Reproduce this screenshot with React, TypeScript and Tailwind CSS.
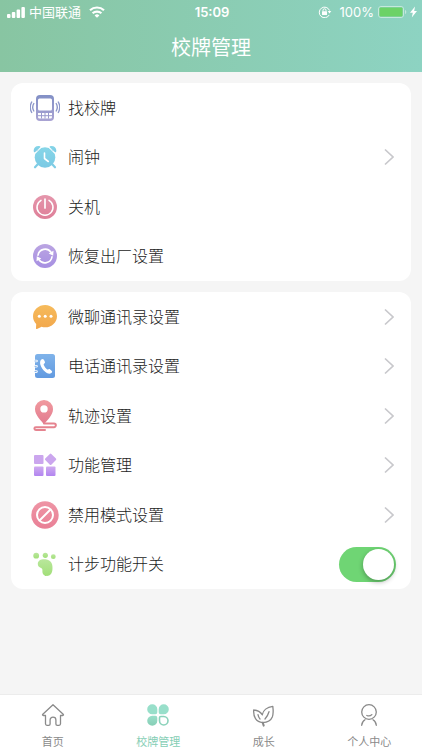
import { useState, type ReactNode } from "react";

function Svg({ size, children, box = 24 }: { size: string; children: ReactNode; box?: number }) {
  return (
    <svg viewBox={`0 0 ${box} ${box}`} className={`${size} shrink-0`} fill="none" aria-hidden="true">
      {children}
    </svg>
  );
}

function Gradient({ id, from, to }: { id: string; from: string; to: string }) {
  return (
    <defs>
      <linearGradient id={id} x1="0" y1="0" x2="0" y2="1">
        <stop offset="0" stopColor={from} />
        <stop offset="1" stopColor={to} />
      </linearGradient>
    </defs>
  );
}

const BadgeIcon = (
  <Svg size="size-[30px]" box={30}>
    <Gradient id="badge" from="#8290c6" to="#a9a3d3" />
    <rect x="6" y="2" width="18" height="26" rx="4" fill="url(#badge)" />
    <rect x="8" y="5.5" width="14" height="12" rx="1.5" fill="#fff" />
    <path d="M8 20h14v4a1.500 1.500 0 0 1-1.500 1.500h-11A1.500 1.500 0 0 1 8 24z" fill="#fff" />
    <path d="M8 22.700h14M11.500 20v5.500M15 20v5.500M18.500 20v5.500" stroke="#9a9acd" strokeWidth="1" />
    <path
      d="M3.800 10.500c-1.200 2-1.200 5.500 0 7.500M1.700 9c-1.700 3-1.700 7.500 0 10.500M26.200 10.500c1.200 2 1.200 5.500 0 7.500M28.300 9c1.700 3 1.700 7.500 0 10.500"
      stroke="#8d97ca"
      strokeWidth="1.400"
      strokeLinecap="round"
    />
  </Svg>
);

const AlarmIcon = (
  <Svg size="size-6">
    <Gradient id="alarm" from="#86d6e8" to="#7bc9e4" />
    <g fill="url(#alarm)">
      <circle cx="12" cy="12.500" r="10.300" />
      <path d="M.900 6.800C-.2 3.500 3 .2 6.900 1.300c.6.200.7.700.2 1.100L2.200 7.100c-.5.400-1.100.3-1.300-.3zM23.100 6.800C24.200 3.500 21 .2 17.100 1.300c-.6.200-.7.700-.2 1.100l4.900 4.700c.5.400 1.100.3 1.300-.3z" />
    </g>
    <path d="M4.500 19.500 2 22.300M19.500 19.500 22 22.300" stroke="#80cde5" strokeWidth="2.200" strokeLinecap="round" />
    <path d="M11.500 8v5.500l3.800 3" stroke="#fff" strokeWidth="1.600" strokeLinecap="round" strokeLinejoin="round" />
    <path d="M2.200 8.500 7.800 2.900M21.800 8.500 16.200 2.900" stroke="#fff" strokeWidth=".8" />
  </Svg>
);

const PowerIcon = (
  <Svg size="size-6">
    <Gradient id="power" from="#e596ac" to="#de7f98" />
    <circle cx="12" cy="12" r="12" fill="url(#power)" />
    <path d="M8 5.300a8 8 0 1 0 8 0" stroke="#fff" strokeWidth="1.500" strokeLinecap="round" />
    <path d="M12 4v9" stroke="#fff" strokeWidth="1.700" strokeLinecap="round" />
  </Svg>
);

const ResetIcon = (
  <Svg size="size-6">
    <Gradient id="reset" from="#bba5e2" to="#a68fe2" />
    <circle cx="12" cy="12" r="12" fill="url(#reset)" />
    <path d="M5 11.200A7.200 7.200 0 0 1 18 8.300M19 12.800A7.200 7.200 0 0 1 6 15.700" stroke="#fff" strokeWidth="1.600" strokeLinecap="round" />
    <path d="m20.500 6.700-.3 5-4.500-2.200zM3.500 17.300l.3-5 4.500 2.200z" fill="#fff" />
  </Svg>
);

const ChatIcon = (
  <Svg size="size-6">
    <Gradient id="chat" from="#f6bb5c" to="#f2a74b" />
    <path d="M12.200 0C5.500 0 0 4.900 0 11.200c0 3.500 1.500 6 3.200 7.800L3 23.300c0 .7.500.9 1 .6l4.600-2.200c1.100.4 2.300.6 3.600.6C18.800 22.300 24 17.400 24 11.200S18.800 0 12.200 0z" fill="url(#chat)" />
    <circle cx="6.300" cy="11.200" r="1.500" fill="#fff" />
    <circle cx="12.200" cy="11.200" r="1.500" fill="#fff" />
    <circle cx="18" cy="11.200" r="1.500" fill="#fff" />
  </Svg>
);

const ContactsIcon = (
  <Svg size="size-6">
    <Gradient id="contacts" from="#7fb3ea" to="#629ae0" />
    <rect x="2" y="0" width="20" height="24" rx="2.500" fill="url(#contacts)" />
    <path d="M1.500 7h2M1.500 12.300h2M1.500 17.600h2" stroke="#fff" strokeWidth="2.600" strokeLinecap="round" />
    <path d="M2 7h1.300M2 12.300h1.300M2 17.600h1.300" stroke="#78ace8" strokeWidth="1" strokeLinecap="round" />
    <path d="M8.300 5.500c1.100-1 2.100-.7 2.700.4l.9 1.900c.3.800 0 1.400-.8 1.900-.5.400-.5.800-.2 1.500.7 1.700 1.700 3 3 4.100.5.400.9.400 1.400.1.700-.5 1.300-.5 1.900 0l1.400 1.300c.8.800.7 1.700-.3 2.400-1.600 1.100-3.800.7-5.800-1-2.500-2.100-4.300-4.700-5.100-7.400-.6-2.200-.4-4 .9-5.200z" fill="#fff" />
  </Svg>
);

const PinIcon = (
  <svg viewBox="0 0 24 32" className="h-8 w-6 shrink-0" fill="none" aria-hidden="true">
    <Gradient id="pin" from="#f19a9f" to="#e27b8f" />
    <path fillRule="evenodd" d="M11 0a9 9 0 0 0-9 9.200C2 15 8.200 20.500 10 23.200c.6.900 1.400.9 2 0C13.800 20.500 20 15 20 9.200A9 9 0 0 0 11 0zm0 5.200a3.700 3.700 0 1 1 0 7.400 3.700 3.700 0 0 1 0-7.400z" fill="url(#pin)" />
    <path d="M11 23.500h10a1.800 1.800 0 0 1 0 3.700H2.800a1.300 1.300 0 0 0 0 2.800H12" stroke="#e5838f" strokeWidth="2" strokeLinecap="round" />
  </svg>
);

const ModulesIcon = (
  <Svg size="size-6">
    <Gradient id="modules" from="#cfabef" to="#b285f0" />
    <rect x="1" y="2" width="9.500" height="9" rx="1" fill="#cba6ee" />
    <rect x="1" y="13.500" width="9.500" height="9.500" rx="1" fill="url(#modules)" />
    <rect x="13" y="13.500" width="9.500" height="9.500" rx="1" fill="url(#modules)" />
    <rect x="13.300" y="2" width="8.600" height="8.600" rx="1" transform="rotate(45 17.600 6.300)" fill="#cba6ee" />
  </Svg>
);

const ForbidIcon = (
  <Svg size="size-7" box={28}>
    <Gradient id="forbid" from="#ee95a5" to="#e98096" />
    <circle cx="14" cy="14" r="13.700" fill="url(#forbid)" />
    <circle cx="14" cy="14" r="8" stroke="#fff" strokeWidth="2" />
    <path d="m8.500 19.500 11-11" stroke="#fff" strokeWidth="2" />
  </Svg>
);

const FootIcon = (
  <Svg size="size-6">
    <Gradient id="foot" from="#b9e79c" to="#a2df79" />
    <g fill="url(#foot)">
      <path d="M12.500 7.300c-4-.5-7.500 1-7.700 4.200-.2 2.700 1.400 3.700 3.200 4.500 1.500.7 1.500 1.700 1.400 3.300-.1 2.900 1.900 4.700 4.600 4.700 3.200 0 4.900-2.200 5.400-5.900.7-5.700-1-10.200-6.900-10.800z" />
      <circle cx="3.200" cy="3.700" r="2.900" />
      <circle cx="12.300" cy="3.300" r="2.600" />
      <circle cx="20.300" cy="4.700" r="2.400" />
    </g>
  </Svg>
);

type Item = { label: string; icon: ReactNode; chevron?: boolean };

const deviceItems: Item[] = [
  { label: "找校牌", icon: BadgeIcon },
  { label: "闹钟", icon: AlarmIcon, chevron: true },
  { label: "关机", icon: PowerIcon },
  { label: "恢复出厂设置", icon: ResetIcon },
];

const settingItems: Item[] = [
  { label: "微聊通讯录设置", icon: ChatIcon, chevron: true },
  { label: "电话通讯录设置", icon: ContactsIcon, chevron: true },
  { label: "轨迹设置", icon: PinIcon, chevron: true },
  { label: "功能管理", icon: ModulesIcon, chevron: true },
  { label: "禁用模式设置", icon: ForbidIcon, chevron: true },
];

function RowContent({ label, icon }: Item) {
  return (
    <>
      <span className="flex w-8 shrink-0 justify-center">{icon}</span>
      <span className="flex-1 pb-0.5 text-left">{label}</span>
    </>
  );
}

function Row(item: Item) {
  return (
    <li className="grid">
      <button type="button" className="flex w-full items-center gap-[7px] pr-[17px] pl-[18px]">
        <RowContent {...item} />
        {item.chevron && (
          <svg viewBox="0 0 10 18" className="h-[18px] w-[10px]" fill="none" aria-hidden="true">
            <path d="m1 1.500 8 7.500-8 7.500" stroke="#c8c8cc" strokeWidth="1.700" />
          </svg>
        )}
      </button>
    </li>
  );
}

function StatusBar() {
  return (
    <div className="flex h-6 items-center text-[13px] leading-6">
      <div className="flex flex-1 items-center pl-[7px]">
        <svg viewBox="0 0 18 12" className="h-3 w-[18px]" fill="#fff" aria-hidden="true">
          <rect x="0" y="8" width="3.500" height="4" rx="1" />
          <rect x="4.800" y="6" width="3.500" height="6" rx="1" />
          <rect x="9.600" y="3.500" width="3.500" height="8.500" rx="1" />
          <rect x="14.400" y="1" width="3.500" height="11" rx="1" />
        </svg>
        <span className="ml-1">中国联通</span>
        <svg viewBox="0 0 16 12" className="ml-2 h-3 w-4" fill="none" stroke="#fff" strokeWidth="2.200" aria-hidden="true">
          <path d="M1 4.300a10.200 10.200 0 0 1 14 0M3.600 7.300a6.400 6.400 0 0 1 8.800 0" />
          <path d="M8 11.800 5.600 9.400a3.500 3.500 0 0 1 4.800 0z" fill="#fff" stroke="none" />
        </svg>
      </div>
      <time className="font-['Inter'] font-semibold">15:09</time>
      <div className="flex flex-1 items-center justify-end pr-[5px]">
        <svg viewBox="0 0 14 12" className="h-3 w-[14px]" fill="none" stroke="#fff" aria-hidden="true">
          <path d="M11.200 9A5.300 5.300 0 1 1 11.500 4.500" strokeWidth="1" />
          <path d="M9.700 5h3.600l-1.800 2.600z" fill="#fff" stroke="none" />
          <rect x="4" y="5.300" width="5" height="3.700" rx=".5" fill="#fff" stroke="none" />
          <path d="M5 5.500V4.300a1.500 1.500 0 0 1 3 0v1.200" />
        </svg>
        <span className="ml-2 font-['Inter']">100%</span>
        <svg viewBox="0 0 30 12" className="ml-1 h-3 w-[30px]" fill="none" aria-hidden="true">
          <rect x=".5" y=".5" width="25" height="11" rx="2.500" stroke="#c5e8dc" />
          <rect x="1.500" y="1.500" width="23" height="9" rx="1" fill="#6cd267" />
          <path d="M27 4c1.700.5 1.700 3.500 0 4z" fill="#c5e8dc" />
        </svg>
        <svg viewBox="0 0 7 12" className="ml-[2px] h-3 w-[7px]" fill="#fff" aria-hidden="true">
          <path d="M5 .500 0 6.800h2.800L1.800 11.500 7 5H4.200z" />
        </svg>
      </div>
    </div>
  );
}

const tabs: { label: string; icon: ReactNode; active?: boolean }[] = [
  {
    label: "首页",
    icon: (
      <Svg size="size-6">
        <path d="M12 1.700 1.800 11.200c-.6.600-.3 1.300.5 1.300h2.200v8.300c0 1 .5 1.500 1.500 1.500h1.700c.9 0 1.400-.5 1.400-1.400v-4c0-1.600 1.200-2.700 2.900-2.700s2.900 1.100 2.900 2.700v4c0 .9.500 1.400 1.400 1.400H18c1 0 1.500-.5 1.500-1.500v-8.300h2.200c.8 0 1.100-.7.500-1.300z" stroke="currentColor" strokeWidth="1.300" strokeLinejoin="round" />
      </Svg>
    ),
  },
  {
    label: "校牌管理",
    active: true,
    icon: (
      <Svg size="size-6">
        <Gradient id="clover" from="#9adfca" to="#86ceb5" />
        <path d="M6.300 1.200a5 5 0 0 1 5 5v3.100a2 2 0 0 1-2 2H6.200a5 5 0 0 1 .1-10.100z" fill="#98dfca" />
        <path d="M17.700 1.200a5 5 0 0 0-5 5v3.100c0 1.100.9 2 2 2h3.100a5 5 0 0 0-.1-10.100z" fill="#98dfca" />
        <path d="M6.300 22.800a5 5 0 0 0 5-5v-3.100a2 2 0 0 0-2-2H6.200a5 5 0 0 0 .1 10.100z" fill="url(#clover)" />
        <path d="M17.700 22a4.200 4.200 0 0 1-4.200-4.200v-3c0-.7.600-1.300 1.300-1.300h3a4.200 4.200 0 0 1-.1 8.500z" stroke="#8ad2ba" strokeWidth="1.600" />
      </Svg>
    ),
  },
  {
    label: "成长",
    icon: (
      <Svg size="size-6">
        <g stroke="currentColor" strokeWidth="1.300" strokeLinecap="round" strokeLinejoin="round">
          <path d="M10.300 11.700C11 7.500 15 4 20.800 3.300c.5 3.700.6 7.700-.5 10.700-1.400 3.500-5 5.400-9.600 5.600" />
          <path d="M10.300 11.700C8.500 9 5 7.200 1.700 7c-.2 3 .2 6.300 1.800 8.700 1.600 2.500 4 3.700 7.200 3.900" />
          <path d="M13 16c1.800-2 3.200-4.500 4-7.300M8 16c-1-1-1.700-2.600-2-4.300" />
          <path d="m10.700 19.600 1 3" strokeWidth="2" />
        </g>
      </Svg>
    ),
  },
  {
    label: "个人中心",
    icon: (
      <Svg size="size-6">
        <g stroke="currentColor" strokeWidth="1.300" strokeLinecap="round">
          <circle cx="12" cy="9" r="7.300" />
          <path d="M9.800 12.500c1.700.7 3.800.4 5-.9M8 16.800C6 18 4.900 19.700 4.700 22.300M16 16.800c2 1.200 3.100 2.900 3.300 5.500" />
        </g>
      </Svg>
    ),
  },
];

export default function App() {
  const [stepCounting, setStepCounting] = useState(true);

  return (
    <div className="flex min-h-screen flex-col bg-[#f5f5f5] font-['Noto_Sans_CJK_SC',sans-serif] text-[#1c1c1c]">
      <header className="bg-linear-to-r from-[#88c5a2] to-[#8dd3c2] text-white">
        <StatusBar />
        <h1 className="h-12 text-center text-xl leading-[46px]">校牌管理</h1>
      </header>

      <main className="flex flex-1 flex-col gap-[11px] px-[11px] py-[11px]">
        <ul className="grid min-h-[198px] auto-rows-fr rounded-xl bg-white font-light">
          {deviceItems.map((item) => (
            <Row key={item.label} {...item} />
          ))}
        </ul>
        <ul className="grid min-h-[297px] auto-rows-fr rounded-xl bg-white font-light">
          {settingItems.map((item) => (
            <Row key={item.label} {...item} />
          ))}
          <li className="grid">
            <label className="flex cursor-pointer items-center gap-[7px] pr-[15px] pl-[18px]">
              <RowContent label="计步功能开关" icon={FootIcon} />
              <input
                type="checkbox"
                role="switch"
                checked={stepCounting}
                onChange={(event) => setStepCounting(event.target.checked)}
                className="flex h-[35px] w-[57px] cursor-pointer appearance-none items-center rounded-full bg-[#dddddd] p-[2px] before:size-[31px] before:rounded-full before:bg-white before:shadow-[0_2px_5px_rgba(0,0,0,0.3)] before:content-[''] checked:justify-end checked:bg-[#6fd574]"
              />
            </label>
          </li>
        </ul>
      </main>

      <nav className="sticky bottom-0 grid grid-cols-4 border-t border-[#ececec] bg-white">
        {tabs.map((tab) => (
          <a
            key={tab.label}
            href="#"
            aria-current={tab.active ? "page" : undefined}
            className={`flex h-[55px] flex-col items-center gap-[6px] pt-2 text-[11px] leading-4 ${tab.active ? "text-[#86ceb5]" : "text-[#8a8a8a]"}`}
          >
            {tab.icon}
            <span>{tab.label}</span>
          </a>
        ))}
      </nav>
    </div>
  );
}
